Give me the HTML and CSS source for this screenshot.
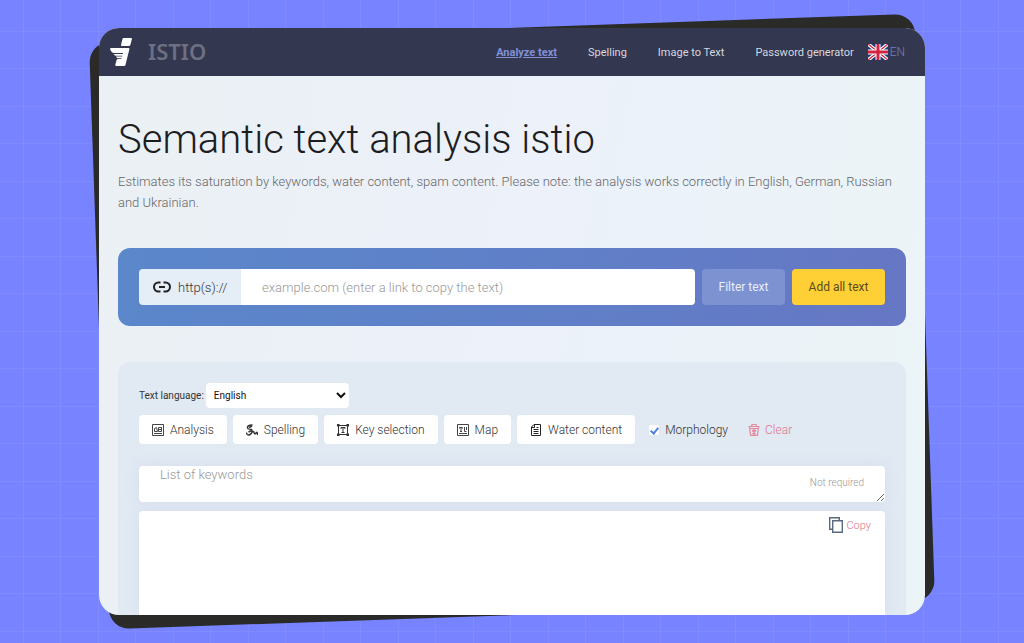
FILE: index.html
```html
<!DOCTYPE html>
<html lang="en">
<head>
<meta charset="utf-8">
<meta name="viewport" content="width=device-width, initial-scale=1">
<title>Semantic text analysis istio</title>
<link rel="stylesheet" href="styles.css">
</head>
<body>
<div class="stage">
  <div class="card">
    <header class="topbar">
      <a class="brand" href="#">
        <svg class="brand-mark" viewBox="0 0 22 28" aria-hidden="true">
          <path fill="#fff" d="M13.500 0h7.500q1.200 0 .9 1.200l-1.500 5.600q-.3 1.200-1.500 1.200h-7q-1.200 0-.9-1.200l1.500-5.800q.200-1 1-1zM1 10h17.500q1.200 0 .9 1.200l-3.900 15.600q-.2 1.200-1.400 1.200H6.500q-1.500 0-1.200-1.300l1.200-4.400q.3-1.300 1.600-1.300h3.400l.2-.8H8q-1.500 0-2-1.600h6.200l.2-.9H6q-1.700 0-2.300-1.700h9.200l.2-.9H4Q1.500 14.900.2 11.200q-.3-1.200.8-1.200z"/>
        </svg>
        <span class="brand-name">ISTIO</span>
      </a>
      <nav class="nav">
        <a class="nav-link nav-link-active" href="#">Analyze text</a>
        <a class="nav-link" href="#">Spelling</a>
        <a class="nav-link" href="#">Image to Text</a>
        <a class="nav-link" href="#">Password generator</a>
      </nav>
      <a class="lang" href="#">
        <svg class="flag" viewBox="0 0 20 16" aria-hidden="true">
          <path fill="#1d3a7a" d="M0 0h20v16H0z"/>
          <path stroke="#fff" stroke-width="3.600" d="M0 0l20 16M20 0L0 16"/>
          <path stroke="#d5203f" stroke-width="1.300" d="M0 0l20 16M20 0L0 16"/>
          <path stroke="#fff" stroke-width="5" d="M10 0v16M0 8h20"/>
          <path stroke="#d5203f" stroke-width="3" d="M10 0v16M0 8h20"/>
        </svg>
        <span>EN</span>
      </a>
    </header>
    <main class="content">
      <h1 class="title">Semantic text analysis istio</h1>
      <p class="lead">Estimates its saturation by keywords, water content, spam content. Please note: the analysis works correctly in English, German, Russian and Ukrainian.</p>

      <form class="link-panel">
        <div class="link-field">
          <label class="link-prefix" for="url">
            <svg class="link-icon" viewBox="0 0 18 12" aria-hidden="true">
              <path fill="none" stroke="#222" stroke-width="2" d="M7.500 1.500h-2a4.500 4.500 0 0 0 0 9h2M10.500 1.500h2a4.500 4.500 0 0 1 0 9h-2M6 6h6"/>
            </svg>
            http(s)://
          </label>
          <input class="link-input" id="url" type="text" placeholder="example.com (enter a link to copy the text)">
        </div>
        <button class="btn btn-filter" type="button">Filter text</button>
        <button class="btn btn-add" type="button">Add all text</button>
      </form>

      <section class="tools">
        <div class="language">
          <label for="language">Text language:</label>
          <select class="language-select" id="language"><option>English</option></select>
        </div>
        <div class="toolbar">
          <button class="tool" type="button">
            <svg class="icon" viewBox="0 0 12 12" aria-hidden="true"><path fill="none" stroke="#444" d="M.5.5h11v11H.5zM2 9.500h8M2.500 7.500v-3l2-1 1 4zM6.500 3.500h3v4h-3zM6.500 5.500h3"/></svg>
            Analysis
          </button>
          <button class="tool" type="button">
            <svg class="icon" viewBox="0 0 12 12" aria-hidden="true"><path fill="none" stroke="#333" stroke-width="1.400" d="M6.500 1Q2 .8 1.500 3t4 2.500Q7 9 4 10.500T.5 8.500M3 3.500l3-1.500M2.500 8l4-2M5.500 9q2-3 2.500-.500t2 .500 1.500 2"/></svg>
            Spelling
          </button>
          <button class="tool" type="button">
            <svg class="icon" viewBox="0 0 12 12" aria-hidden="true"><path fill="none" stroke="#333" d="M1.500 1.500h9v9h-9zM4 5V3.500h4V5M6 3.500v5M4.500 8.500h3"/><path fill="#333" d="M0 0h2.500v2.500H0zM9.500 0H12v2.500H9.500zM0 9.500h2.500V12H0zM9.500 9.500H12V12H9.500z"/></svg>
            Key selection
          </button>
          <button class="tool" type="button">
            <svg class="icon" viewBox="0 0 12 12" aria-hidden="true"><path fill="none" stroke="#444" d="M.5.5h11v11H.5zM2 9.500h8M2.500 4.500v-1h3v1M4 3.500v4M3 7.500h2M7.500 3v4.500h2M9.500 3v3"/></svg>
            Map
          </button>
          <button class="tool" type="button">
            <svg class="icon" viewBox="0 0 12 12" aria-hidden="true"><path fill="none" stroke="#222" d="M4 .5h6.500v11h-9V3zM4.500 1v2.500H2M3.500 5.500h5M3.500 7.500h5M3.500 9.500h5M6.500 3.500h2"/></svg>
            Water content
          </button>
          <label class="morphology"><input class="check" type="checkbox" checked>Morphology</label>
          <button class="clear" type="button">
            <svg class="icon" viewBox="0 0 12 12" aria-hidden="true"><path fill="none" stroke="#e58a9f" stroke-width="1.200" d="M.5 2.500h11M3.500 2.500l.5-2h4l.5 2M1.600 3l.9 8.400h7l.9-8.400M1.500 4.500h9M4 6l3.500 4M8 6l-3.500 4M6 5v6"/></svg>
            Clear
          </button>
        </div>
        <div class="keywords">
          <textarea class="keywords-input" aria-label="List of keywords" placeholder="List of keywords"></textarea>
          <span class="keywords-note">Not required</span>
        </div>
        <div class="editor">
          <textarea class="editor-input" aria-label="Text"></textarea>
          <button class="copy" type="button">
            <svg class="copy-icon" viewBox="0 0 14 16" aria-hidden="true"><path fill="none" stroke="#59697f" stroke-width="1.400" d="M3.700 3.700h9.600v11.600H3.700zM3 12.300H.7V.7h9.600V3"/></svg>
            Copy
          </button>
        </div>
      </section>
    </main>
  </div>
</div>
</body>
</html>
```
FILE: styles.css
```css
* { box-sizing: border-box; }

body {
  margin: 0;
  font-family: Roboto, "Liberation Sans", sans-serif;
  font-weight: 300;
  font-size: 13px;
  color: #333;
  background-color: #7883ff;
  background-image:
    linear-gradient(#808bff 1px, transparent 1px, transparent 37px, #808bff 37px, #808bff 38px, transparent 38px),
    linear-gradient(90deg, #808bff 1px, transparent 1px, transparent 37px, #808bff 37px, #808bff 38px, transparent 38px);
  background-size: 75px 75px;
  background-position: 23px 31px;
}

button, input, select, textarea { font: inherit; border: 0; }
textarea, .link-input { outline: 0; }
a { color: inherit; text-decoration: none; }

.stage {
  height: 100vh;
  padding: 28px 99px;
  display: grid;
  overflow: hidden;
}

.stage::before {
  content: "";
  grid-area: 1 / 1;
  border-radius: 20px;
  background: #2a2a28;
  transform: rotate(-2deg);
}

.card {
  grid-area: 1 / 1;
  min-height: 0;
  display: flex;
  flex-direction: column;
  overflow: hidden;
  border-radius: 20px;
  z-index: 1;
  background: linear-gradient(100deg, #ebf0f4, #ecf1fa 50%, #ebf4f6);
}

.topbar {
  flex: none;
  height: 48px;
  padding: 0 20px 0 11px;
  display: flex;
  align-items: center;
  background: #333750;
}

.brand { display: flex; align-items: center; gap: 16px; margin-right: auto; }
.brand-mark { width: 22px; height: 28px; }
.brand-name { font: 600 22px/28px "Noto Sans", sans-serif; color: #6c7080; padding-bottom: 3px; }
.nav { display: flex; gap: 31px; font-size: 11px; font-weight: 400; color: #d6d8df; }
.nav-link-active { font-weight: 700; color: #8290d4; text-decoration: underline; }
.lang { display: flex; align-items: center; gap: 2px; margin-left: 14px; font-size: 12px; color: #7480bd; }
.flag { width: 20px; height: 16px; }

.content { flex: 1; min-height: 0; padding: 40px 19px 0; display: flex; flex-direction: column; }
.title { margin: 0; font-size: 40px; line-height: 48px; font-weight: 300; color: #1d1d1f; }
.lead { margin: 7px 0 35px; font-size: 13px; line-height: 21px; color: #666; }

.link-panel {
  display: flex;
  gap: 7px;
  padding: 21px;
  border-radius: 12px;
  background: linear-gradient(100deg, #5b87cb, #5f80c8 50%, #6677c4);
}

.link-field { flex: 1; min-width: 0; display: flex; height: 36px; border-radius: 4px; overflow: hidden; }
.link-prefix { flex: none; width: 102px; padding-left: 14px; display: flex; align-items: center; gap: 7px; background: #e5edf7; color: #333; }
.link-icon { width: 18px; height: 12px; }
.link-input { flex: 1; min-width: 0; padding: 0 21px; background: #fff; }
.link-input::placeholder, .keywords-input::placeholder { color: #999; opacity: 1; }
.btn { height: 36px; padding: 0; border-radius: 4px; font-size: 12px; font-weight: 400; }
.btn-filter { width: 83px; background: #7c92d1; color: #e8edf9; }
.btn-add { width: 93px; background: #ffd036; color: #5a4b18; }

.tools {
  flex: 1;
  min-height: 0;
  margin-top: 36px;
  padding: 21px 21px 0;
  display: flex;
  flex-direction: column;
  border-radius: 12px 12px 0 0;
  background: #e1e9f3;
}

.language { display: flex; align-items: center; gap: 2px; font-size: 10px; font-weight: 400; }
.language-select { width: 143px; height: 25px; padding: 0 4px; border-radius: 4px; background: #fff; color: #111; }
.toolbar { display: flex; align-items: center; gap: 6px; margin: 7px 0 22px; font-size: 12px; }
.tool { height: 29px; padding: 0 13px; display: flex; align-items: center; gap: 6px; border-radius: 4px; background: #fff; color: #333; white-space: nowrap; }
.icon { width: 12px; height: 12px; }
.morphology { display: flex; align-items: center; gap: 6px; margin-left: 8px; }
.check { appearance: none; width: 10px; height: 10px; margin: 0; border-radius: 2px; background: #fff; display: grid; place-items: center; }
.check:checked::before { content: ""; width: 3px; height: 6px; border: solid #4f7fdc; border-width: 0 2px 2px 0; transform: rotate(40deg); }
.clear { display: flex; align-items: center; gap: 5px; margin-left: 8px; background: none; color: #e0758d; }

.keywords { position: relative; display: flex; margin-bottom: 9px; }
.keywords-input { flex: 1; height: 36px; padding: 0 21px; line-height: 18px; border-radius: 4px; background: #fff; box-shadow: 0 0 14px #d5dded; overflow: hidden; }
.keywords-note { position: absolute; right: 21px; top: 11px; font-size: 10px; color: #999; }
.editor { position: relative; flex: 1; min-height: 0; display: flex; }
.editor-input { flex: 1; resize: none; padding: 14px 21px; border-radius: 4px 4px 0 0; background: #fff; box-shadow: 0 0 14px #d5dded; }
.copy { position: absolute; right: 14px; top: 6px; padding: 0; display: flex; align-items: center; gap: 3px; background: none; color: #d97088; font-size: 11px; }
.copy-icon { width: 14px; height: 16px; }
```
